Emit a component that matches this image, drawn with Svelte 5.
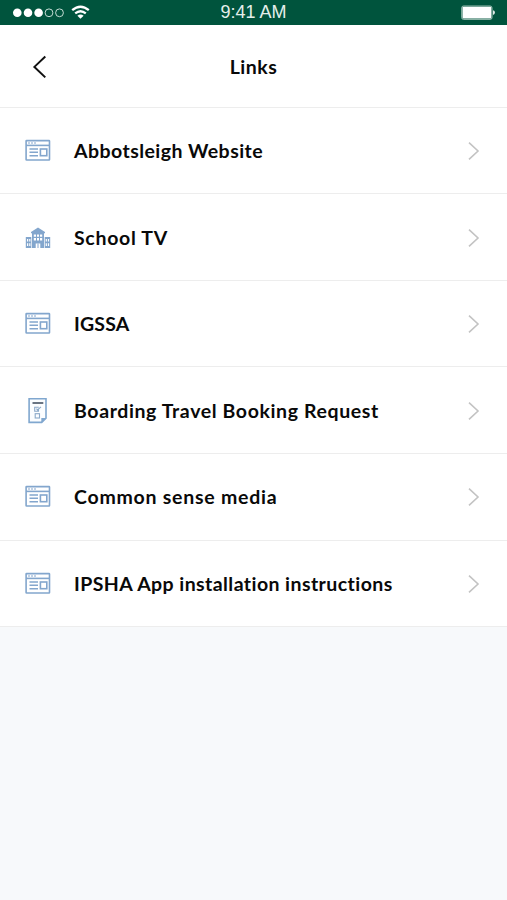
<script>
  const links = [
    { label: 'Abbotsleigh Website', icon: 'web', track: 0.45 },
    { label: 'School TV', icon: 'school', track: 0.7 },
    { label: 'IGSSA', icon: 'web', track: 0.2 },
    { label: 'Boarding Travel Booking Request', icon: 'form', track: 0.61 },
    { label: 'Common sense media', icon: 'web', track: 0.75 },
    { label: 'IPSHA App installation instructions', icon: 'web', track: 0.43 }
  ];
</script>

<div class="screen">
  <div class="status">
    <svg class="signal" width="71" height="25" viewBox="0 0 71 25">
      <g fill="#fff"><circle cx="17.3" cy="12.8" r="4.3" /><circle cx="28" cy="12.8" r="4.3" /><circle cx="38.6" cy="12.8" r="4.3" /></g>
      <g fill="none" stroke="#c5dcd4" stroke-width="1"><circle cx="49" cy="12.8" r="3.9" /><circle cx="59.5" cy="12.8" r="3.9" /></g>
    </svg>
    <svg class="wifi" width="20" height="25" viewBox="71 0 20 25">
      <g fill="none" stroke="#fff" stroke-width="2.3"><path d="M72.2 10.2Q80.5 3.2 88.8 10.2" /><path d="M75.2 13.4Q80.5 9 85.8 13.4" /></g>
      <path d="M77.4 15.8Q80.5 13.4 83.6 15.8L80.5 18.8Z" fill="#fff" />
    </svg>
    <span class="time">9:41 AM</span>
    <svg class="battery" width="36" height="25" viewBox="460 0 36 25">
      <rect x="461.7" y="6" width="30.3" height="13.4" rx="1.8" fill="none" stroke="#aac9be" stroke-width=".9" />
      <rect x="462.5" y="6.8" width="28.8" height="11.8" rx=".8" fill="#fff" />
      <path d="M493 10.3Q495 10.7 495 12.6T493 15Z" fill="#e0ebe7" />
    </svg>
  </div>
  <header>
    <svg class="back" width="16" height="24" viewBox="0 0 16 24"><path d="M13.3 1.5L2.4 11.9L13.3 22.4" fill="none" stroke="#111" stroke-width="2" /></svg>
    <h1>Links</h1>
  </header>
  <nav>
    {#each links as link}
      <div class="row">
        <svg class="icon" width="26" height="26" viewBox="0 0 26 26">
          {#if link.icon === 'web'}
            <g fill="none" stroke="#83a6cd">
              <rect x="1.1" y="2.6" width="23.4" height="19.4" rx=".5" stroke-width="1.6" />
              <path d="M1 7.4H24.5" stroke-width="1.6" />
              <path d="M3 5H11" stroke-width="1.1" stroke-dasharray="2 1" />
              <path d="M4.5 11H13M4.5 14.3H13M4.5 17.7H13" stroke-width="1.5" />
              <rect x="15.4" y="11" width="6.4" height="6.7" stroke-width="1.6" />
            </g>
          {:else if link.icon === 'school'}
            <g fill="#83a6cd">
              <path d="M6 7L13 2.5L20 7V8.3H6Z" />
              <path fill-rule="evenodd" d="M7 8H19V23H15.3V18.5H10.7V23H7ZM8.8 9.5V11.7H11V9.5ZM12 9.5V11.7H14V9.5ZM15 9.5V11.7H17.2V9.5ZM8.8 13V15.5H11V13ZM12 13V15.5H14V13ZM15 13V15.5H17.2V13Z" />
              <path fill-rule="evenodd" d="M.8 12H6.3V23H.8ZM2 14V16.5H3.2V14ZM4.2 14V16.5H5.4V14ZM2 18.3V21H3.2V18.3ZM4.2 18.3V21H5.4V18.3Z" />
              <path fill-rule="evenodd" d="M19.7 12H25.2V23H19.7ZM20.7 14V16.5H21.9V14ZM22.9 14V16.5H24.1V14ZM20.7 18.3V21H21.9V18.3ZM22.9 18.3V21H24.1V18.3Z" />
              <path d="M12.5 18.5H13.5V23H12.5Z" />
            </g>
          {:else}
            <path d="M4.1 .8H21V20.2L16.7 24.4H4.1Z" fill="#fbfdff" stroke="#80a7cf" stroke-width="1.6" />
            <path d="M16.3 24.5V20H21.3Z" fill="#80a7cf" />
            <path d="M7.5 5H18.3" stroke="#697482" stroke-width="2" />
            <g fill="none" stroke="#8ba9c9" stroke-width="1.1"><path d="M13.8 9.2H9.7V13.2H13.5V11.5M11.5 10.7L12.5 11.9L16 8.9" /><rect x="10.2" y="15.7" width="4.3" height="4.3" /></g>
          {/if}
        </svg>
        <span class="label" style="letter-spacing: {link.track}px">{link.label}</span>
        <svg class="chevron" width="14" height="20" viewBox="0 0 14 20"><path d="M2 1.6L11 10L2 18.4" fill="none" stroke="#c3c3c3" stroke-width="1.6" /></svg>
      </div>
    {/each}
  </nav>
</div>

<style>
  :global(body) { margin: 0; background: #f7f9fb; }
  .screen { width: 507px; height: 900px; overflow: hidden; background: #f7f9fb; font-family: Lato, 'Open Sans', sans-serif; color: #090909; }
  .status { height: 25px; box-sizing: border-box; padding-right: 11px; background: #00543d; display: grid; grid-template-columns: 71px 20px 1fr 36px; position: relative; }
  .time { position: absolute; left: 0; right: 0; text-align: center; font: 18px/25px 'Liberation Sans', Arial, sans-serif; color: #e4efeb; }
  .battery { grid-column: 4; }
  svg { display: block; }
  header { height: 83px; box-sizing: border-box; padding-top: 1px; background: #fff; border-bottom: 1px solid #ededed; display: grid; grid-template-columns: 80px 1fr 80px; align-items: center; }
  .back { margin-left: 32px; }
  h1 { margin: 0; font-size: 19.5px; line-height: 24px; letter-spacing: .5px; font-weight: 700; text-align: center; }
  nav { margin-top: -.4px; }
  .row { height: 86.6px; box-sizing: border-box; padding: 1px 26px 0 25px; display: flex; align-items: center; background: #fff; border-bottom: 1px solid #ededed; }
  .icon { flex: none; margin-right: 23px; }
  .label { flex: 1; font-size: 19.5px; line-height: 26px; font-weight: 700; white-space: nowrap; }
  .chevron { flex: none; }
</style>
